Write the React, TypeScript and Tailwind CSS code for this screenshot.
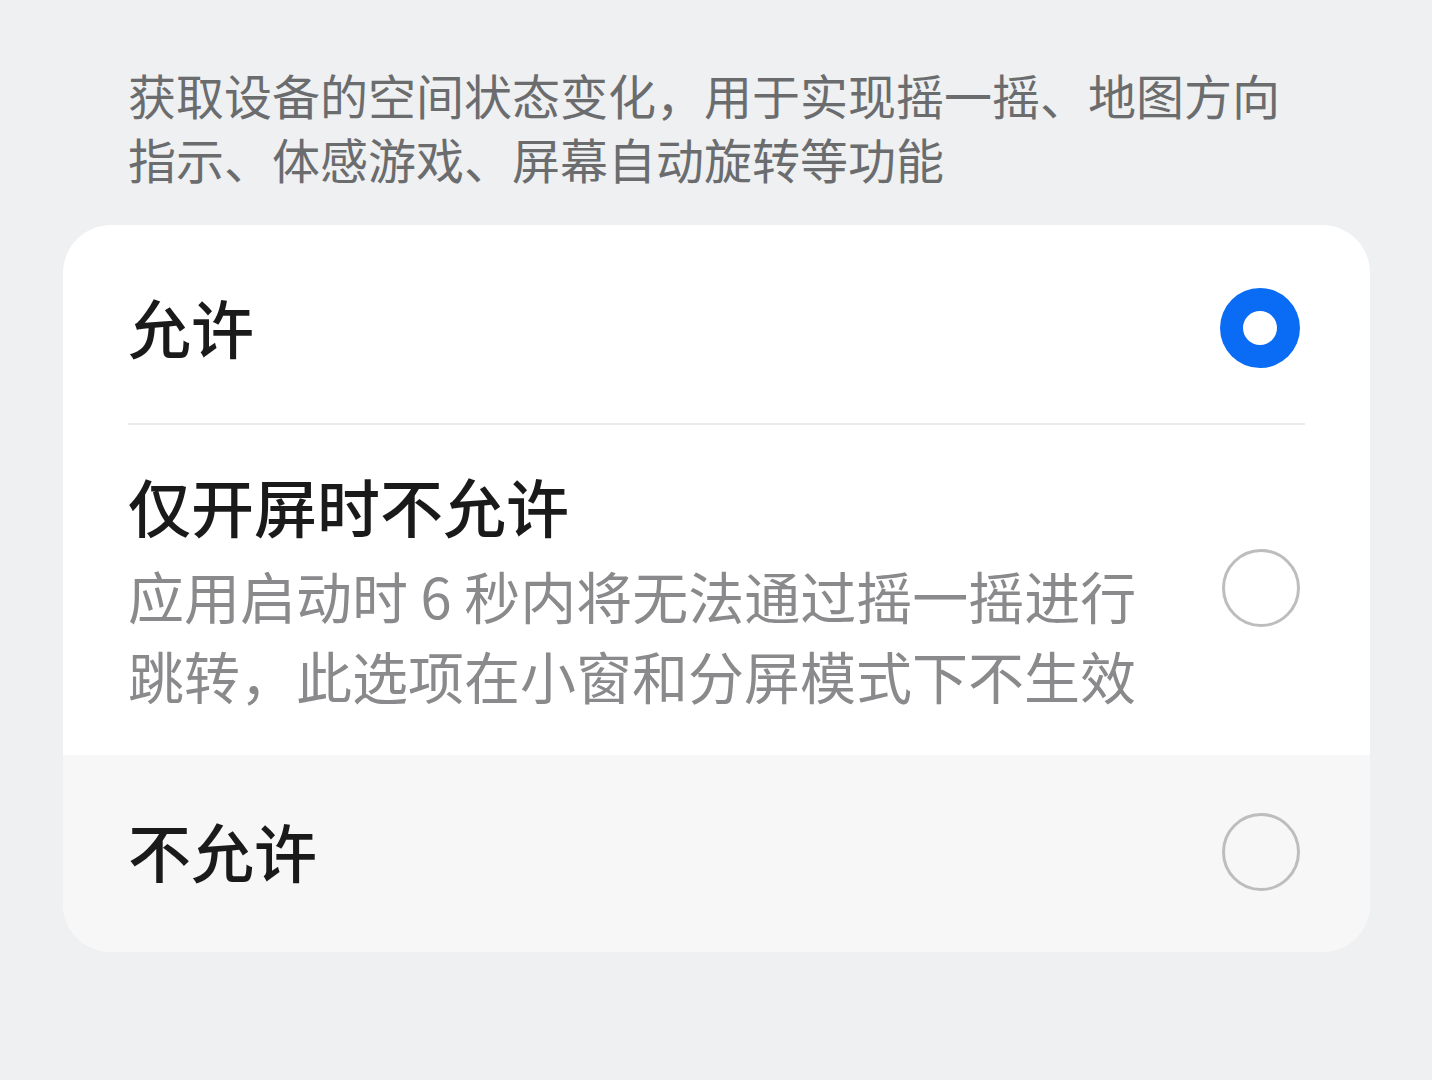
import React, { useState } from 'react'

const options = [
  { value: 'allow', title: '允许' },
  {
    value: 'screen-on',
    title: '仅开屏时不允许',
    desc: ['应用启动时 6 秒内将无法通过摇一摇进行', '跳转，此选项在小窗和分屏模式下不生效'],
  },
  { value: 'deny', title: '不允许' },
]

const Radio = ({ checked }: { checked: boolean }) =>
  checked ? (
    <div className="w-[80px] h-[80px] rounded-full bg-[#0a6cf5] flex items-center justify-center shrink-0">
      <div className="w-[34px] h-[34px] rounded-full bg-white" />
    </div>
  ) : (
    <div className="w-[78px] h-[78px] rounded-full border-[3px] border-[#bdbdbd] shrink-0" />
  )

export default function App() {
  const [value, setValue] = useState('allow')

  return (
    <div
      className="w-[1432px] h-[1080px] bg-[#eff0f2] overflow-hidden"
      style={{ fontFamily: '"Noto Sans CJK SC", "Noto Sans", sans-serif' }}
    >
      {/* description */}
      <div className="pt-[62px] pl-[128px] text-[48px] leading-[64px] text-[#6b6c6e]">
        <div>获取设备的空间状态变化，用于实现摇一摇、地图方向</div>
        <div>指示、体感游戏、屏幕自动旋转等功能</div>
      </div>

      {/* options card */}
      <div className="mt-[35px] ml-[63px] w-[1307px] bg-white rounded-[48px] overflow-hidden">
        {/* 允许 */}
        <div
          onClick={() => setValue('allow')}
          className="h-[198px] pl-[65px] pr-[70px] flex items-center justify-between cursor-pointer"
        >
          <span className="text-[63px] leading-[80px] font-medium text-[#1a1a1a] mt-[4px]">{options[0].title}</span>
          <div className="mt-[7px]">
            <Radio checked={value === 'allow'} />
          </div>
        </div>
        <div className="mx-[65px] h-[2px] bg-[#ebebeb]" />

        {/* 仅开屏时不允许 */}
        <div
          onClick={() => setValue('screen-on')}
          className="h-[330px] pl-[65px] pr-[70px] pt-[40px] flex items-start justify-between cursor-pointer"
        >
          <div>
            <div className="text-[63px] leading-[80px] font-medium text-[#1a1a1a]">{options[1].title}</div>
            <div className="mt-[10px] text-[56px] leading-[80px] text-[#8a8a8c]">
              {options[1].desc!.map(line => (
                <div key={line}>{line}</div>
              ))}
            </div>
          </div>
          <div className="mt-[84px]">
            <Radio checked={value === 'screen-on'} />
          </div>
        </div>

        {/* 不允许 (pressed) */}
        <div
          onClick={() => setValue('deny')}
          className="h-[197px] pl-[65px] pr-[70px] flex items-center justify-between bg-[#f7f7f8] cursor-pointer"
        >
          <span className="text-[63px] leading-[80px] font-medium text-[#1a1a1a] -mt-[8px]">{options[2].title}</span>
          <div className="-mt-[3px]">
            <Radio checked={value === 'deny'} />
          </div>
        </div>
      </div>
    </div>
  )
}
